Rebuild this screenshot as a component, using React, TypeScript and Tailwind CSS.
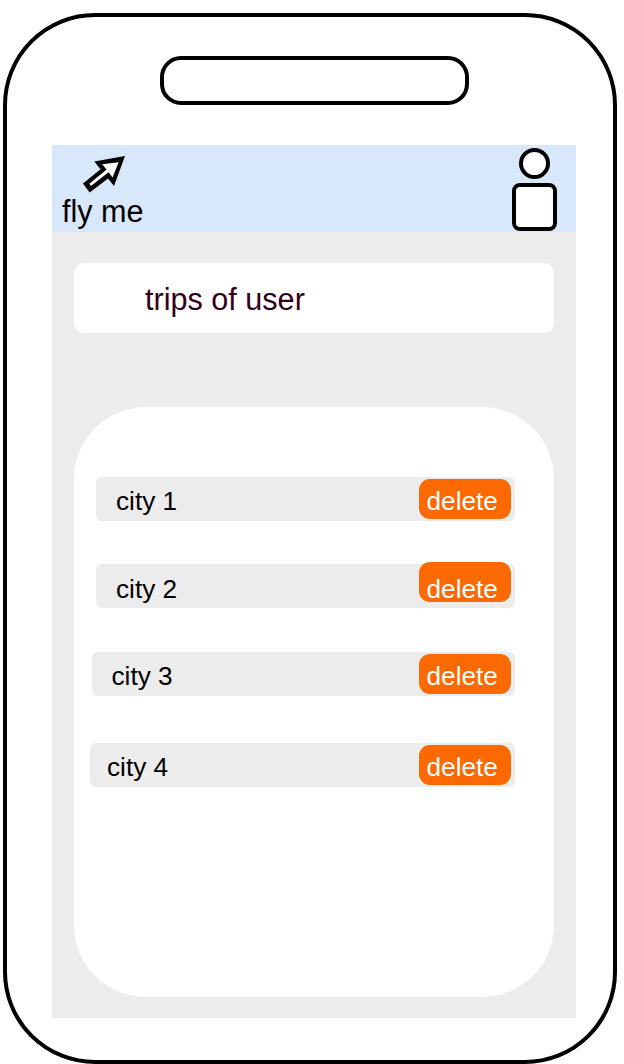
type Trip = { name: string; row: string; label: string; button: string };

const trips: Trip[] = [
  { name: "city 1", row: "ml-[22px] pl-[20px]", label: "pt-[6px]", button: "mt-[2px] pt-[4px]" },
  { name: "city 2", row: "mt-[43px] ml-[22px] pl-[20px]", label: "pt-[7px]", button: "-mt-[2px] pt-[13px]" },
  { name: "city 3", row: "mt-[43.5px] ml-[18px] pl-[19.5px]", label: "pt-[6px]", button: "mt-[2px] pt-[4px]" },
  { name: "city 4", row: "mt-[47.5px] ml-[15.5px] pl-[17.5px]", label: "pt-[6px]", button: "mt-[2px] pt-[4px]" },
];

function Logo() {
  return (
    <div className="flex flex-col pl-[10px] pt-[9px]">
      <svg width="46" height="40" viewBox="0 0 46 40" className="ml-[19px]" aria-hidden="true">
        <path d="M44 2 L13.3 7.4 L19.6 15.2 L2 29.4 L8.7 38.6 L27 24.4 L33 32 Z" fill="#000" />
        <path d="M37.6 8.2 L21.2 10.2 L25.6 15.6 L8.4 29.8 L10 32 L27.6 18.2 L31.6 23.4 Z" fill="#fff" />
      </svg>
      <span className="-mt-[0.5px] text-[30.6px] leading-[34px]">fly me</span>
    </div>
  );
}

function UserIcon() {
  return (
    <div className="flex flex-col items-center gap-[4px] pt-[3px] pr-[19px]">
      <div className="size-[30.5px] rounded-full border-4 border-black bg-white" />
      <div className="h-[48.5px] w-[44.5px] rounded-[8px] border-4 border-black bg-white" />
    </div>
  );
}

function TripRow({ trip }: { trip: Trip }) {
  return (
    <li className={`mr-[39px] flex h-[44px] items-start justify-between rounded-[6px] bg-[#ececec] pr-[4px] text-[26.2px] ${trip.row}`}>
      <span className={`flex h-[44px] items-center ${trip.label}`}>{trip.name}</span>
      <button
        className={`flex h-[40px] w-[92px] items-center rounded-[11px] bg-[#fb6900] pl-[8px] leading-[30px] text-white ${trip.button}`}
      >
        delete
      </button>
    </li>
  );
}

export default function App() {
  return (
    <div className="h-[1064px] w-[624px] overflow-hidden bg-white pt-[13px] pl-[3px] font-['Liberation_Sans',Arial,sans-serif] text-black">
      <div className="h-[1051px] w-[614px] rounded-[92px] border-4 border-black bg-white">
        <div className="mt-[39px] ml-[152.5px] h-[48.5px] w-[309.5px] rounded-[21px] border-4 border-black" />
        <div className="mt-[40.5px] ml-[45px] h-[873px] w-[523.5px] bg-[#ececec]">
          <header className="flex h-[87px] justify-between bg-[#d9e7fa]">
            <Logo />
            <UserIcon />
          </header>
          <main className="flex flex-col px-[22px] pt-[31px]">
            <h1 className="flex h-[70px] items-center rounded-[10px] bg-white pt-[3px] pl-[71px] text-[30.6px] text-[#33001a]">
              trips of user
            </h1>
            <ul className="mt-[74px] flex h-[589.5px] flex-col rounded-[72px] bg-white pt-[70px]">
              {trips.map((trip) => (
                <TripRow key={trip.name} trip={trip} />
              ))}
            </ul>
          </main>
        </div>
      </div>
    </div>
  );
}
